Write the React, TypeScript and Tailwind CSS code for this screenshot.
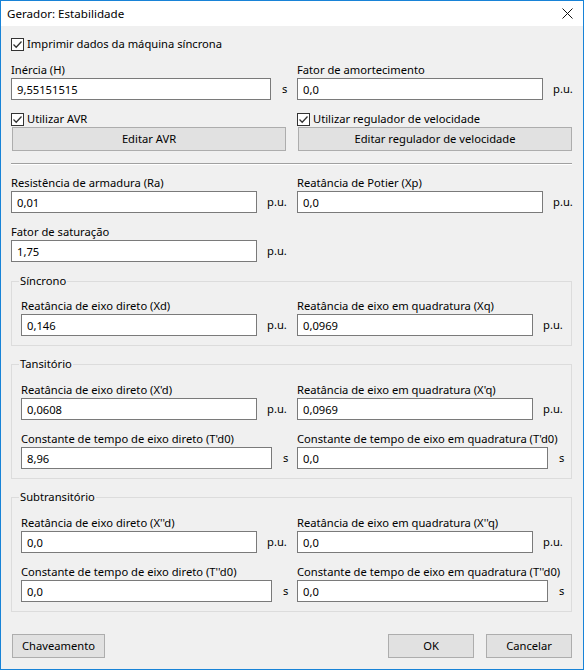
import React from "react"

function Check({ label }: { label: string }) {
  return (
    <div className="flex h-[16px] items-center gap-[3px]">
      <svg width="13" height="13" viewBox="0 0 13 13" className="shrink-0">
        <rect x="0.5" y="0.5" width="12" height="12" fill="#fff" stroke="#333" />
        <path d="M2.5 6.5 L5.2 9.2 L10.5 3.5" fill="none" stroke="#333" strokeWidth="1.3" />
      </svg>
      <span className="leading-[16px]">{label}</span>
    </div>
  )
}

function Field({
  label,
  value,
  unit,
  w,
  mt = "",
}: {
  label: string
  value: string
  unit: string
  w: string
  mt?: string
}) {
  return (
    <div className={`flex flex-col ${mt}`}>
      <div className="h-[16px] leading-[16px] whitespace-nowrap">{label}</div>
      <div className="flex items-center">
        <input
          readOnly
          value={value}
          className={`h-[22px] ${w} border border-[#7a7a7a] bg-white pl-[5px] outline-none`}
        />
        <span className={unit === "s" ? "ml-[11px]" : "ml-[10px]"}>{unit}</span>
      </div>
    </div>
  )
}

function Btn({ children, w }: { children: React.ReactNode; w: string }) {
  return (
    <button className={`h-[24px] ${w} border border-[#adadad] bg-[#e1e1e1] text-center`}>
      {children}
    </button>
  )
}

function Group({
  title,
  mt,
  children,
}: {
  title: string
  mt: string
  children: React.ReactNode
}) {
  return (
    <fieldset className={`${mt} border border-[#dcdcdc] pb-[9px]`}>
      <legend className="ml-[7px] px-[1px] leading-[16px]">{title}</legend>
      <div className="pl-[9px]">{children}</div>
    </fieldset>
  )
}

export default function App() {
  return (
    <div className="w-[584px] h-[670px] border border-[#1883d7] flex flex-col font-['Noto_Sans',sans-serif] text-[11.2px] text-black bg-[#f0f0f0]">
      {/* title bar */}
      <div className="h-[25px] bg-white flex items-center justify-between pl-[6px] pr-[10px] shrink-0">
        <span className="text-[11.6px]">Gerador: Estabilidade</span>
        <svg width="11" height="11" viewBox="0 0 11 11">
          <path d="M0.5 0.5 L10.5 10.5 M10.5 0.5 L0.5 10.5" stroke="#111" strokeWidth="1" />
        </svg>
      </div>

      <div className="flex-1 flex flex-col pl-[10px] pr-[11px]">
        <div className="mt-[10px]">
          <Check label="Imprimir dados da máquina síncrona" />
        </div>

        <div className="grid grid-cols-[286px_1fr] mt-[10px]">
          <Field label="Inércia (H)" value="9,55151515" unit="s" w="w-[260px]" />
          <Field label="Fator de amortecimento" value="0,0" unit="p.u." w="w-[246px]" />
        </div>

        <div className="grid grid-cols-[286px_1fr] mt-[11px]">
          <div className="flex flex-col">
            <Check label="Utilizar AVR" />
            <div className="pl-[1px]">
              <Btn w="w-[274px]">Editar AVR</Btn>
            </div>
          </div>
          <div className="flex flex-col">
            <Check label="Utilizar regulador de velocidade" />
            <div className="pl-[1px]">
              <Btn w="w-[274px]">Editar regulador de velocidade</Btn>
            </div>
          </div>
        </div>

        <div className="mt-[12px] h-[1px] bg-[#a0a0a0] border-b border-white box-content" />

        <div className="grid grid-cols-[286px_1fr] mt-[10px]">
          <Field label="Resistência de armadura (Ra)" value="0,01" unit="p.u." w="w-[246px]" />
          <Field label="Reatância de Potier (Xp)" value="0,0" unit="p.u." w="w-[246px]" />
        </div>
        <Field label="Fator de saturação" value="1,75" unit="p.u." w="w-[246px]" mt="mt-[11px]" />

        <Group title="Síncrono" mt="mt-[11px]">
          <div className="grid grid-cols-[276px_1fr] mt-[9px]">
            <Field label="Reatância de eixo direto (Xd)" value="0,146" unit="p.u." w="w-[236px]" />
            <Field label="Reatância de eixo em quadratura (Xq)" value="0,0969" unit="p.u." w="w-[236px]" />
          </div>
        </Group>

        <Group title="Tansitório" mt="mt-[10px]">
          <div className="grid grid-cols-[276px_1fr] mt-[10px]">
            <Field label="Reatância de eixo direto (X'd)" value="0,0608" unit="p.u." w="w-[236px]" />
            <Field label="Reatância de eixo em quadratura (X'q)" value="0,0969" unit="p.u." w="w-[236px]" />
          </div>
          <div className="grid grid-cols-[276px_1fr] mt-[11px]">
            <Field label="Constante de tempo de eixo direto (T'd0)" value="8,96" unit="s" w="w-[251px]" />
            <Field label="Constante de tempo de eixo em quadratura (T'd0)" value="0,0" unit="s" w="w-[251px]" />
          </div>
        </Group>

        <Group title="Subtransitório" mt="mt-[10px]">
          <div className="grid grid-cols-[276px_1fr] mt-[10px]">
            <Field label="Reatância de eixo direto (X''d)" value="0,0" unit="p.u." w="w-[236px]" />
            <Field label="Reatância de eixo em quadratura (X''q)" value="0,0" unit="p.u." w="w-[236px]" />
          </div>
          <div className="grid grid-cols-[276px_1fr] mt-[11px]">
            <Field label="Constante de tempo de eixo direto (T''d0)" value="0,0" unit="s" w="w-[251px]" />
            <Field label="Constante de tempo de eixo em quadratura (T''d0)" value="0,0" unit="s" w="w-[251px]" />
          </div>
        </Group>

        <div className="mt-[22px] flex items-center pl-[1px]">
          <Btn w="w-[93px]">Chaveamento</Btn>
          <div className="flex-1" />
          <Btn w="w-[86px]">OK</Btn>
          <div className="w-[12px]" />
          <Btn w="w-[86px]">Cancelar</Btn>
        </div>
      </div>
    </div>
  )
}
